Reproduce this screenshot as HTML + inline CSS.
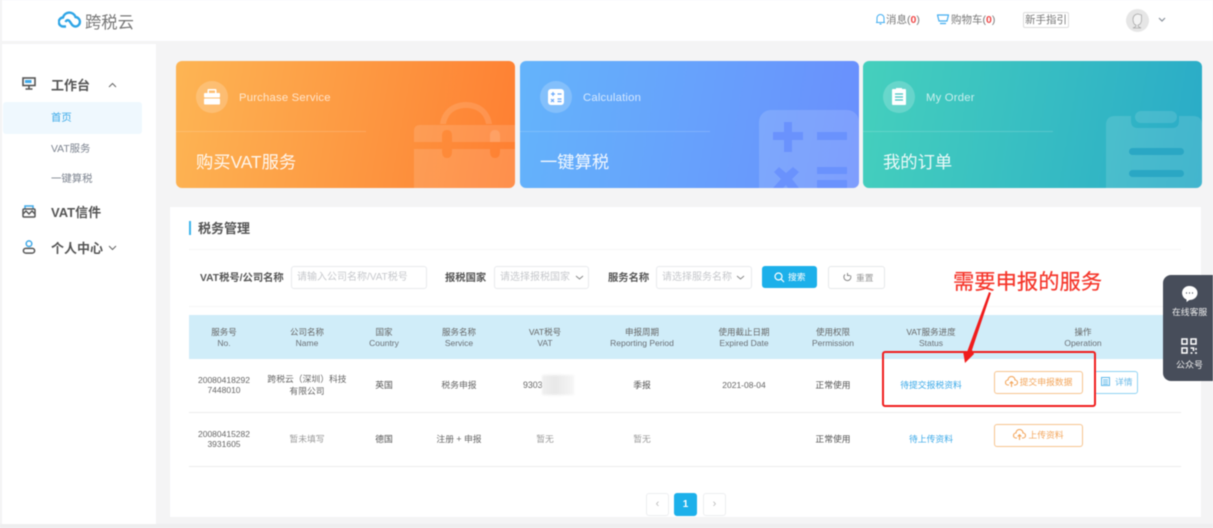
<!DOCTYPE html>
<html><head><meta charset="utf-8">
<style>
*{box-sizing:border-box;margin:0;padding:0}
html,body{width:1213px;height:528px;overflow:hidden;background:#f4f4f5}
body{font-family:"Liberation Sans","Noto Sans CJK SC",sans-serif;color:#555}
#w{position:absolute;left:0;top:0;width:1213px;height:528px;overflow:hidden;filter:blur(.45px)}
.a{position:absolute;white-space:nowrap}
.c{position:absolute;text-align:center;white-space:nowrap;transform:translateX(-50%)}
.card{position:absolute;top:61px;width:339px;height:127px;border-radius:6px;overflow:hidden;color:#fff}
.card .circle{position:absolute;left:20px;top:20px;width:32px;height:32px;border-radius:50%;background:rgba(255,255,255,.2)}
.card .en{position:absolute;left:63px;top:31px;font-size:11.3px;opacity:.72;letter-spacing:.2px}
.card .ln{position:absolute;left:0;top:70px;width:190px;height:1px;background:rgba(255,255,255,.16)}
.card .zh{position:absolute;left:20px;top:87px;font-size:17.3px;opacity:.9;white-space:nowrap}
.card svg{position:absolute}
.th{font-size:8.5px;line-height:10.5px;color:#666;top:327px}
.th b{font-weight:400;color:#6a6f75;display:block}
.td{font-size:8.8px;color:#555;line-height:12px}
.lbl{font-size:10.3px;font-weight:700;color:#555;top:269px}
.ipt{position:absolute;top:266px;height:23px;border:1px solid #e8eaed;border-radius:3px;background:#fff;font-size:10px;color:#c6c8cc;line-height:22px;padding-left:5px;white-space:nowrap;overflow:hidden}
.obtn{position:absolute;left:994px;width:89px;height:23px;border:1px solid #f7c48e;border-radius:3px;background:#fff;color:#f3a65c;font-size:8.8px;line-height:21px;text-align:center}
.pg{position:absolute;top:493px;width:23px;height:23px;border:1px solid #eceef0;border-radius:3px;background:#fff;color:#bbb;text-align:center;font-size:11px;line-height:20px}
.side{font-size:13px;font-weight:700;color:#555}
.sub{font-size:10.4px;color:#7d8490}
</style></head><body><div id="w">
<!-- header -->
<div class="a" style="left:2px;top:0;width:1211px;height:41px;background:#fff"></div>
<svg class="a" style="left:58px;top:10px" width="24" height="18" viewBox="0 0 24 18" fill="none" stroke="#2fa5e6" stroke-width="2.400"><path d="M8 16.500H5.500a4.500 4.500 0 0 1-.5-9A6.500 6.500 0 0 1 17.500 7a4.800 4.800 0 0 1 .5 9.500c-3 0-4-1.500-5.500-4S9 9 7.500 12"/></svg>
<div class="a" style="left:85px;top:9px;font-size:16.300px;color:#777">跨税云</div>
<svg class="a" style="left:875px;top:13px" width="11" height="12" viewBox="0 0 11 12" fill="none" stroke="#45aef0" stroke-width="1"><path d="M1 9.500h9M2 9.500V5a3.500 3.500 0 0 1 7 0v4.500M4.500 11h2"/></svg>
<div class="a" style="left:886px;top:12px;font-size:10.500px;color:#777">消息(<b style="color:#f04848">0</b>)</div>
<svg class="a" style="left:937px;top:14px" width="12" height="11" viewBox="0 0 12 11" fill="none" stroke="#45aef0" stroke-width="1.200"><path d="M.5 1h11l-1.500 6H2zM3 9.500h6"/></svg>
<div class="a" style="left:951px;top:12px;font-size:10.500px;color:#777">购物车(<b style="color:#f04848">0</b>)</div>
<div class="a" style="left:1023px;top:12px;width:46px;height:16px;border:1px solid #ddd;border-radius:2px;font-size:10.500px;color:#777;text-align:center;line-height:14px">新手指引</div>
<svg class="a" style="left:1126px;top:9px" width="23" height="23" viewBox="0 0 23 23"><circle cx="11.500" cy="11.500" r="11.500" fill="#e6e6e6"/><path d="M7 10a5 5 0 0 1 5-5l3.500 1v5c0 3-2 5-3.500 5v1.500l3 1.500h-8l3-1.500V16c-2 0-3-3-3-6z" fill="#f3f3f3" stroke="#aaa" stroke-width=".8"/></svg>
<svg class="a" style="left:1158px;top:17px" width="8" height="6" fill="none" stroke="#88909a" stroke-width="1.200"><path d="M1 1l3 3 3-3"/></svg>

<!-- sidebar -->
<div class="a" style="left:2px;top:44px;width:154px;height:480px;background:#fff"></div>
<div class="a" style="left:3px;top:102px;width:139px;height:32px;background:#eff8fe;border-radius:3px"></div>
<svg class="a" style="left:22px;top:77px" width="14" height="13" viewBox="0 0 14 13" fill="none" stroke="#555" stroke-width="1.600"><rect x="1" y="1" width="12" height="7.500" fill="#fff"/><rect x="3" y="3" width="6.500" height="3" fill="#3fa9e8" stroke="none"/><path d="M7 9v3M3.500 12h7"/></svg>
<div class="a side" style="left:51px;top:75px">工作台</div>
<svg class="a" style="left:108px;top:82px" width="9" height="6" fill="none" stroke="#666" stroke-width="1"><path d="M1 5l3.500-3.500L8 5"/></svg>
<div class="a sub" style="left:51px;top:109px;color:#3ba9e8">首页</div>
<div class="a sub" style="left:51px;top:140px">VAT服务</div>
<div class="a sub" style="left:51px;top:170px">一键算税</div>
<svg class="a" style="left:22px;top:205px" width="14" height="13" viewBox="0 0 14 13" fill="none" stroke="#555" stroke-width="1.500"><path d="M3 4V1h8v3" stroke="#3fa9e8"/><rect x="1" y="4" width="12" height="8" rx="1"/><path d="M1 9l3-3 3 3 3-3 3 3"/></svg>
<div class="a side" style="left:51px;top:202px">VAT信件</div>
<svg class="a" style="left:22px;top:240px" width="14" height="14" viewBox="0 0 14 15" fill="none" stroke-width="1.600"><circle cx="7" cy="4" r="3" stroke="#3fa9e8"/><rect x="1" y="9" width="12" height="5" rx="2.500" stroke="#555"/></svg>
<div class="a side" style="left:51px;top:238px">个人中心</div>
<svg class="a" style="left:108px;top:245px" width="9" height="6" fill="none" stroke="#666" stroke-width="1"><path d="M1 1l3.500 3.500L8 1"/></svg>

<!-- cards -->
<div class="card" style="left:176px;background:linear-gradient(100deg,#fdb554,#fe7f32)">
<svg style="left:238px;top:40px" width="101" height="87" viewBox="0 0 101 87" fill="#fff" fill-opacity=".13"><path d="M26 23C28 8 40 1 52 1s24 7 26 22h-6C70 12 62 7 52 7S34 12 32 23z"/><path d="M0 30q0-6 6-6h95v17H38v-6q0-6-5-6t-5 6v6H0z"/><path d="M0 48h28v2q0 7 5 7t5-7v-2h38v2q0 7 5 7t5-7v-2h15v39H0z"/><path d="M76 41v-6q0-6 5-6t5 6v6z"/></svg>
<div class="circle"></div>
<svg style="left:28px;top:27px" width="16" height="17" viewBox="0 0 16 17" fill="#fff"><path d="M5 4V1.500h6V4h1.500V1a1 1 0 0 0-1-1h-7a1 1 0 0 0-1 1v3z" transform="translate(0 1)"/><rect y="5" width="16" height="4.500" rx="1"/><rect y="10.500" width="16" height="6" rx="1"/></svg>
<div class="en">Purchase Service</div><div class="ln"></div><div class="zh">购买VAT服务</div></div>

<div class="card" style="left:520px;background:linear-gradient(100deg,#64b4fb,#6a8ffd)">
<svg style="left:239px;top:49px" width="100" height="78" viewBox="0 0 100 78"><rect width="100" height="110" rx="12" fill="#fff" fill-opacity=".14"/><path d="M25 12h8v10h11v8H33v12h-8V30H14v-8h11zM58 22h30v8H58zM58 57h30v7H58zM58 70h30v8H58zM20 57l7 6 7-6 6 5-7 7 7 9H29l-2-3-3 3H14l8-9-7-7z" fill="#6a92fd"/></svg>
<div class="circle"></div>
<svg style="left:28px;top:28px" width="16" height="16" viewBox="0 0 16 16"><rect width="16" height="16" rx="3" fill="#fff"/><path d="M3 5h4M5 3v4M9.500 5h4M3 10l3 3M6 10l-3 3M9.500 10h4M9.500 12.500h4" stroke="#6aa8fb" stroke-width="1.200"/></svg>
<div class="en">Calculation</div><div class="ln"></div><div class="zh">一键算税</div></div>

<div class="card" style="left:863px;background:linear-gradient(100deg,#45d0bd,#2aabc8)">
<svg style="left:243px;top:50px" width="96" height="77" viewBox="0 0 96 77"><path d="M0 14q0-9 9-9h16v5q0 7 7 7h34q7 0 7-7V5h14q9 0 9 9v63H0z" fill="#fff" fill-opacity=".12"/><rect x="29" width="42" height="12" rx="6" fill="#fff" fill-opacity=".12"/><rect x="23" y="37" width="55" height="7" rx="3.500" fill="#2aa7c4"/><rect x="23" y="59" width="55" height="7" rx="3.500" fill="#2aa7c4"/></svg>
<div class="circle"></div>
<svg style="left:28px;top:26px" width="16" height="18" viewBox="0 0 16 18"><path d="M2 2h3V1h6v1h3a1 1 0 0 1 1 1v14a1 1 0 0 1-1 1H2a1 1 0 0 1-1-1V3a1 1 0 0 1 1-1z" fill="#fff"/><path d="M4 7h8M4 10h8M4 13h8" stroke="#45c4c2" stroke-width="1.200"/></svg>
<div class="en">My Order</div><div class="ln"></div><div class="zh">我的订单</div></div>

<!-- panel -->
<div class="a" style="left:170px;top:207px;width:1031px;height:310px;background:#fff"></div>
<div class="a" style="left:189px;top:221px;width:2px;height:14px;background:#3db5ec"></div>
<div class="a" style="left:198px;top:218px;font-size:13px;font-weight:700;color:#555">税务管理</div>
<div class="a" style="left:189px;top:249px;width:992px;height:1px;background:#f6f6f6"></div>
<div class="a" style="left:189px;top:306px;width:992px;height:1px;background:#f6f6f6"></div>

<div class="a lbl" style="left:200px">VAT税号/公司名称</div>
<div class="ipt" style="left:291px;width:136px">请输入公司名称/VAT税号</div>
<div class="a lbl" style="left:445px">报税国家</div>
<div class="ipt" style="left:494px;width:95px">请选择报税国家</div>
<svg class="a" style="left:575px;top:275px;background:#fff" width="9" height="6" fill="none" stroke="#888" stroke-width="1"><path d="M1 1l3.500 3L8 1"/></svg>
<div class="a lbl" style="left:608px">服务名称</div>
<div class="ipt" style="left:656px;width:96px">请选择服务名称</div>
<svg class="a" style="left:736px;top:275px;background:#fff" width="9" height="6" fill="none" stroke="#888" stroke-width="1"><path d="M1 1l3.500 3L8 1"/></svg>
<div class="a" style="left:762px;top:266px;width:55px;height:22px;background:#1cb0ea;border-radius:3px;color:#fff;font-size:8.800px;line-height:22px;padding-left:26px">搜索</div>
<svg class="a" style="left:774px;top:272px" width="11" height="11" fill="none" stroke="#fff" stroke-width="1.200"><circle cx="4.500" cy="4.500" r="3.500"/><path d="M7 7l3 3"/></svg>
<div class="a" style="left:828px;top:266px;width:57px;height:23px;border:1px solid #e6e8ea;border-radius:3px;background:#fff;color:#999;font-size:8.800px;line-height:22px;padding-left:27px">重置</div>
<svg class="a" style="left:843px;top:272px" width="9" height="10" fill="none" stroke="#888" stroke-width="1"><path d="M2 2.500a3.500 3.500 0 1 0 5.500 1M4.500 1v2.500H7" /></svg>

<!-- table -->
<div class="a" style="left:189px;top:315px;width:992px;height:44px;background:#d0edf9"></div>
<div class="c th" style="left:224px">服务号<b>No.</b></div>
<div class="c th" style="left:307px">公司名称<b>Name</b></div>
<div class="c th" style="left:384px">国家<b>Country</b></div>
<div class="c th" style="left:459px">服务名称<b>Service</b></div>
<div class="c th" style="left:545px">VAT税号<b>VAT</b></div>
<div class="c th" style="left:642px">申报周期<b>Reporting Period</b></div>
<div class="c th" style="left:744px">使用截止日期<b>Expired Date</b></div>
<div class="c th" style="left:833px">使用权限<b>Permission</b></div>
<div class="c th" style="left:931px">VAT服务进度<b>Status</b></div>
<div class="c th" style="left:1083px">操作<b>Operation</b></div>

<div class="a" style="left:189px;top:412px;width:992px;height:1px;background:#ececec"></div>
<div class="a" style="left:189px;top:466px;width:992px;height:1px;background:#ececec"></div>

<div class="c td" style="left:224px;top:375px;line-height:10px;color:#666;font-size:8.500px">20080418292<br>7448010</div>
<div class="c td" style="left:307px;top:373px;color:#666">跨税云（深圳）科技<br>有限公司</div>
<div class="c td" style="left:384px;top:379px">英国</div>
<div class="c td" style="left:459px;top:379px;color:#666">税务申报</div>
<div class="a td" style="left:523px;top:379px;color:#666">9303</div>
<div class="a" style="left:542px;top:375px;width:32px;height:20px;background:linear-gradient(90deg,#f0f0f0,#e8e8e8 40%,#f6f6f6);filter:blur(1px)"></div>
<div class="c td" style="left:642px;top:379px">季报</div>
<div class="c td" style="left:744px;top:379px;color:#666;font-size:8.500px">2021-08-04</div>
<div class="c td" style="left:833px;top:379px">正常使用</div>
<div class="c td" style="left:931px;top:379px;color:#3ba9e8">待提交报税资料</div>
<div class="obtn" style="top:371px;padding-left:15px">提交申报数据</div>
<svg class="a" style="left:1005px;top:376px" width="13" height="12" fill="none" stroke="#f3a65c" stroke-width="1.100"><path d="M4 9H3a2.500 2.500 0 0 1 0-5 3.500 3.500 0 0 1 7 0 2.500 2.500 0 0 1 0 5H9M6.500 11V6M4.700 7.500l1.800-1.800 1.800 1.800"/></svg>
<div class="a" style="left:1094px;top:371px;width:44px;height:23px;border:1px solid #8fd3f3;border-radius:3px;background:#fff;color:#6cbbe8;font-size:8.800px;line-height:21px;padding-left:20px">详情</div>
<svg class="a" style="left:1101px;top:377px" width="10" height="10" fill="none" stroke="#5fb8ea" stroke-width="1"><rect x=".5" y=".5" width="8" height="8"/><path d="M2 3h5M2 5h5M2 7h5"/></svg>

<div class="c td" style="left:224px;top:429px;line-height:10px;color:#666;font-size:8.500px">20080415282<br>3931605</div>
<div class="c td" style="left:307px;top:433px;color:#999">暂未填写</div>
<div class="c td" style="left:384px;top:433px">德国</div>
<div class="c td" style="left:459px;top:433px;color:#666">注册 + 申报</div>
<div class="c td" style="left:545px;top:433px;color:#999">暂无</div>
<div class="c td" style="left:642px;top:433px;color:#999">暂无</div>
<div class="c td" style="left:833px;top:433px">正常使用</div>
<div class="c td" style="left:931px;top:433px;color:#3ba9e8">待上传资料</div>
<div class="obtn" style="top:424px;padding-left:15px">上传资料</div>
<svg class="a" style="left:1013px;top:429px" width="13" height="12" fill="none" stroke="#f3a65c" stroke-width="1.100"><path d="M4 9H3a2.500 2.500 0 0 1 0-5 3.500 3.500 0 0 1 7 0 2.500 2.500 0 0 1 0 5H9M6.500 11V6M4.700 7.500l1.800-1.800 1.800 1.800"/></svg>

<!-- pagination -->
<div class="pg" style="left:646px">‹</div>
<div class="pg" style="left:674px;background:#1cb0ea;border-color:#1cb0ea;color:#fff;font-weight:700;font-size:10px;line-height:21px">1</div>
<div class="pg" style="left:703px">›</div>
<div class="a" style="left:0;top:524px;width:1213px;height:4px;background:#eeeeef"></div>

<!-- annotation -->
<div class="a" style="left:882px;top:351px;width:214px;height:56px;border:2px solid #f01d1d;border-radius:3px"></div>
<div class="a" style="left:953px;top:265px;font-size:21.300px;color:#f5352a;-webkit-text-stroke:.2px #f5352a">需要申报的服务</div>
<svg class="a" style="left:960px;top:290px" width="32" height="75" viewBox="0 0 32 75"><path d="M29 2L31 3 12 60 14 64 5 73 3 61 7 62z" fill="#f01d1d"/></svg>

<!-- float -->
<div class="a" style="left:1163px;top:275px;width:50px;height:106px;background:#474d5a;border-radius:8px 0 0 8px"></div>
<svg class="a" style="left:1181px;top:286px" width="17" height="16" viewBox="0 0 17 16"><path d="M8.500 0a8 7 0 0 1 0 14l-3 2v-2.500A7 7 0 0 1 8.500 0z" fill="#fff"/><path d="M5 7h1M8 7h1M11 7h1" stroke="#474d5a" stroke-width="1.200"/></svg>
<div class="a" style="left:1172px;top:305px;font-size:8.800px;color:#eee">在线客服</div>
<svg class="a" style="left:1181px;top:338px" width="16" height="16" viewBox="0 0 16 16" fill="none" stroke="#fff" stroke-width="1.500"><rect x="1" y="1" width="5" height="5"/><rect x="10" y="1" width="5" height="5"/><rect x="1" y="10" width="5" height="5"/><path d="M9.500 10h3v3M15 10v2M9.500 15h2M14 15h2"/></svg>
<div class="a" style="left:1176px;top:358px;font-size:9px;color:#eee">公众号</div>
</div></body></html>
